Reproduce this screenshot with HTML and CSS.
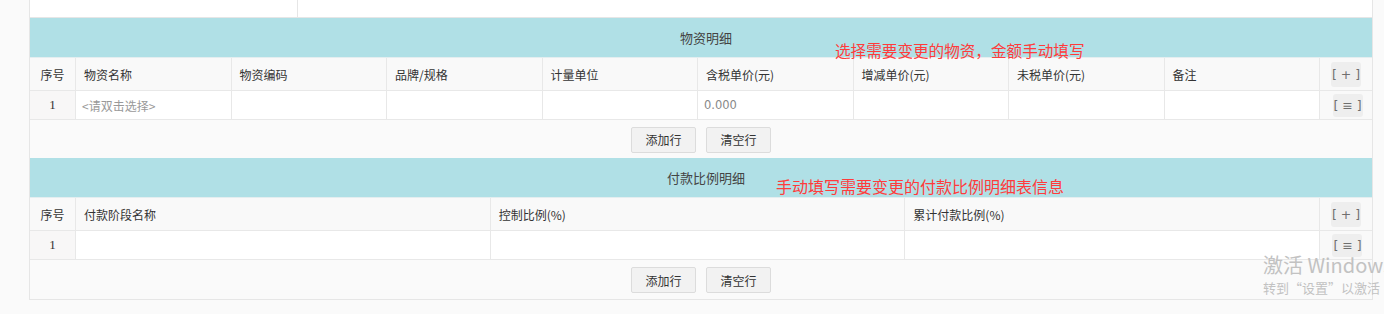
FILE: index.html
```html
<!DOCTYPE html>
<html lang="zh-CN">
<head>
<meta charset="utf-8">
<title>变更明细</title>
<link rel="stylesheet" href="styles.css">
</head>
<body>
<div class="panel">
  <div class="top-row">
    <div class="top-cell first"></div>
    <div class="top-cell"></div>
  </div>

  <section class="block">
    <div class="block-title">物资明细</div>
    <div class="grid goods head">
      <div class="cell idx">序号</div>
      <div class="cell">物资名称</div>
      <div class="cell">物资编码</div>
      <div class="cell">品牌/规格</div>
      <div class="cell">计量单位</div>
      <div class="cell">含税单价(元)</div>
      <div class="cell">增减单价(元)</div>
      <div class="cell">未税单价(元)</div>
      <div class="cell">备注</div>
      <div class="cell op"><span class="op-btn">[ + ]</span></div>
    </div>
    <div class="grid goods data">
      <div class="cell idx">1</div>
      <div class="cell val placeholder">&lt;请双击选择&gt;</div>
      <div class="cell val"></div>
      <div class="cell val"></div>
      <div class="cell val"></div>
      <div class="cell val num">0.000</div>
      <div class="cell val"></div>
      <div class="cell val"></div>
      <div class="cell val"></div>
      <div class="cell op"><span class="op-btn menu">[ ≡ ]</span></div>
    </div>
    <div class="actions">
      <button class="btn">添加行</button>
      <button class="btn">清空行</button>
    </div>
    <div class="note note-goods">选择需要变更的物资，金额手动填写</div>
  </section>

  <section class="block">
    <div class="block-title">付款比例明细</div>
    <div class="grid pay head">
      <div class="cell idx">序号</div>
      <div class="cell">付款阶段名称</div>
      <div class="cell">控制比例(%)</div>
      <div class="cell">累计付款比例(%)</div>
      <div class="cell op"><span class="op-btn">[ + ]</span></div>
    </div>
    <div class="grid pay data">
      <div class="cell idx">1</div>
      <div class="cell val"></div>
      <div class="cell val"></div>
      <div class="cell val"></div>
      <div class="cell op"><span class="op-btn menu">[ ≡ ]</span></div>
    </div>
    <div class="actions last">
      <button class="btn">添加行</button>
      <button class="btn">清空行</button>
    </div>
    <div class="note note-pay">手动填写需要变更的付款比例明细表信息</div>
  </section>
</div>

<div class="watermark">
  <div class="wm-title">激活 Windows</div>
  <div class="wm-sub">转到“设置”以激活</div>
</div>
</body>
</html>
```

FILE: styles.css
```css
html, body {
  margin: 0;
  padding: 0;
  overflow: hidden;
}

body {
  background: #fafafa;
  font-family: "Noto Sans CJK SC", "Noto Sans", sans-serif;
  font-size: 12px;
  color: #333;
  width: 1384px;
  height: 314px;
  position: relative;
}

.panel {
  margin-left: 29px;
  width: 1344px;
  box-sizing: border-box;
  border-left: 1px solid #e6e6e6;
  border-right: 1px solid #e6e6e6;
  border-bottom: 1px solid #e6e6e6;
  background: #fafafa;
}

.top-row {
  display: flex;
  height: 18px;
  box-sizing: border-box;
  border-bottom: 1px solid #e6e6e6;
  background: #fff;
}

.top-cell {
  flex: 1;
}

.top-cell.first {
  flex: 0 0 268px;
  box-sizing: border-box;
  border-right: 1px solid #e6e6e6;
}

.block {
  position: relative;
}

.block-title {
  height: 40px;
  box-sizing: border-box;
  border-bottom: 1px solid #e4eef0;
  background: #b0e0e6;
  display: flex;
  align-items: center;
  justify-content: center;
  padding-left: 10px;
  font-size: 13px;
  color: #444;
}

.grid {
  display: grid;
  box-sizing: border-box;
  border-bottom: 1px solid #e8e8e8;
}

.grid.goods {
  grid-template-columns: 46px repeat(8, 1fr) 52px;
}

.grid.pay {
  grid-template-columns: 46px repeat(3, 1fr) 52px;
}

.grid.head {
  height: 33px;
  background: #f9f9f9;
}

.grid.data {
  height: 29px;
  background: #fff;
}

.cell {
  box-sizing: border-box;
  border-right: 1px solid #e8e8e8;
  display: flex;
  align-items: center;
  padding-left: 8px;
  white-space: nowrap;
  overflow: hidden;
}

.cell.idx {
  justify-content: center;
  padding-left: 0;
}

.data .cell.idx {
  background: #f8f7f7;
  font-family: "Liberation Serif", serif;
  font-size: 13px;
  color: #333;
}

.cell.val {
  padding-left: 6px;
}

.cell.placeholder {
  color: #999;
}

.cell.num {
  color: #888;
  font-family: "DejaVu Sans", sans-serif;
  font-size: 11.5px;
}

.cell.op {
  border-right: none;
  justify-content: center;
  padding-left: 0;
  background: #f9f9f9;
}

.op-btn {
  display: inline-flex;
  align-items: center;
  justify-content: center;
  width: 30px;
  height: 25px;
  border-radius: 3px;
  background: #eeeeee;
  color: #6f6f6f;
  font-family: "DejaVu Sans", sans-serif;
  font-size: 12.5px;
  white-space: pre;
}

.op-btn.menu {
  height: 23px;
  margin-left: 3px;
}

.actions {
  height: 38px;
  display: flex;
  align-items: center;
  justify-content: center;
  gap: 10px;
  background: #fafafa;
  padding-top: 1px;
  box-sizing: border-box;
}

.actions.last {
  height: 39px;
}

.btn {
  width: 65px;
  height: 26px;
  box-sizing: border-box;
  border: 1px solid #dcdcdc;
  border-radius: 2px;
  background: #f2f2f2;
  font-family: "Noto Sans CJK SC", sans-serif;
  font-size: 12px;
  color: #333;
  padding: 0;
  cursor: pointer;
}

.note {
  position: absolute;
  color: #ff3b3b;
  font-size: 15.6px;
  line-height: 22px;
  white-space: nowrap;
}

.note-goods {
  left: 805px;
  top: 21px;
}

.note-pay {
  left: 746px;
  top: 17px;
  font-size: 16px;
}

.watermark {
  position: absolute;
  left: 1263px;
  top: 252px;
  color: #c2c2c2;
  white-space: nowrap;
}

.wm-title {
  font-family: "Noto Sans CJK SC", "Noto Sans", sans-serif;
  font-size: 20px;
  line-height: 26px;
}

.wm-sub {
  font-family: "Noto Sans CJK SC", sans-serif;
  font-size: 13px;
  line-height: 20px;
}
```
